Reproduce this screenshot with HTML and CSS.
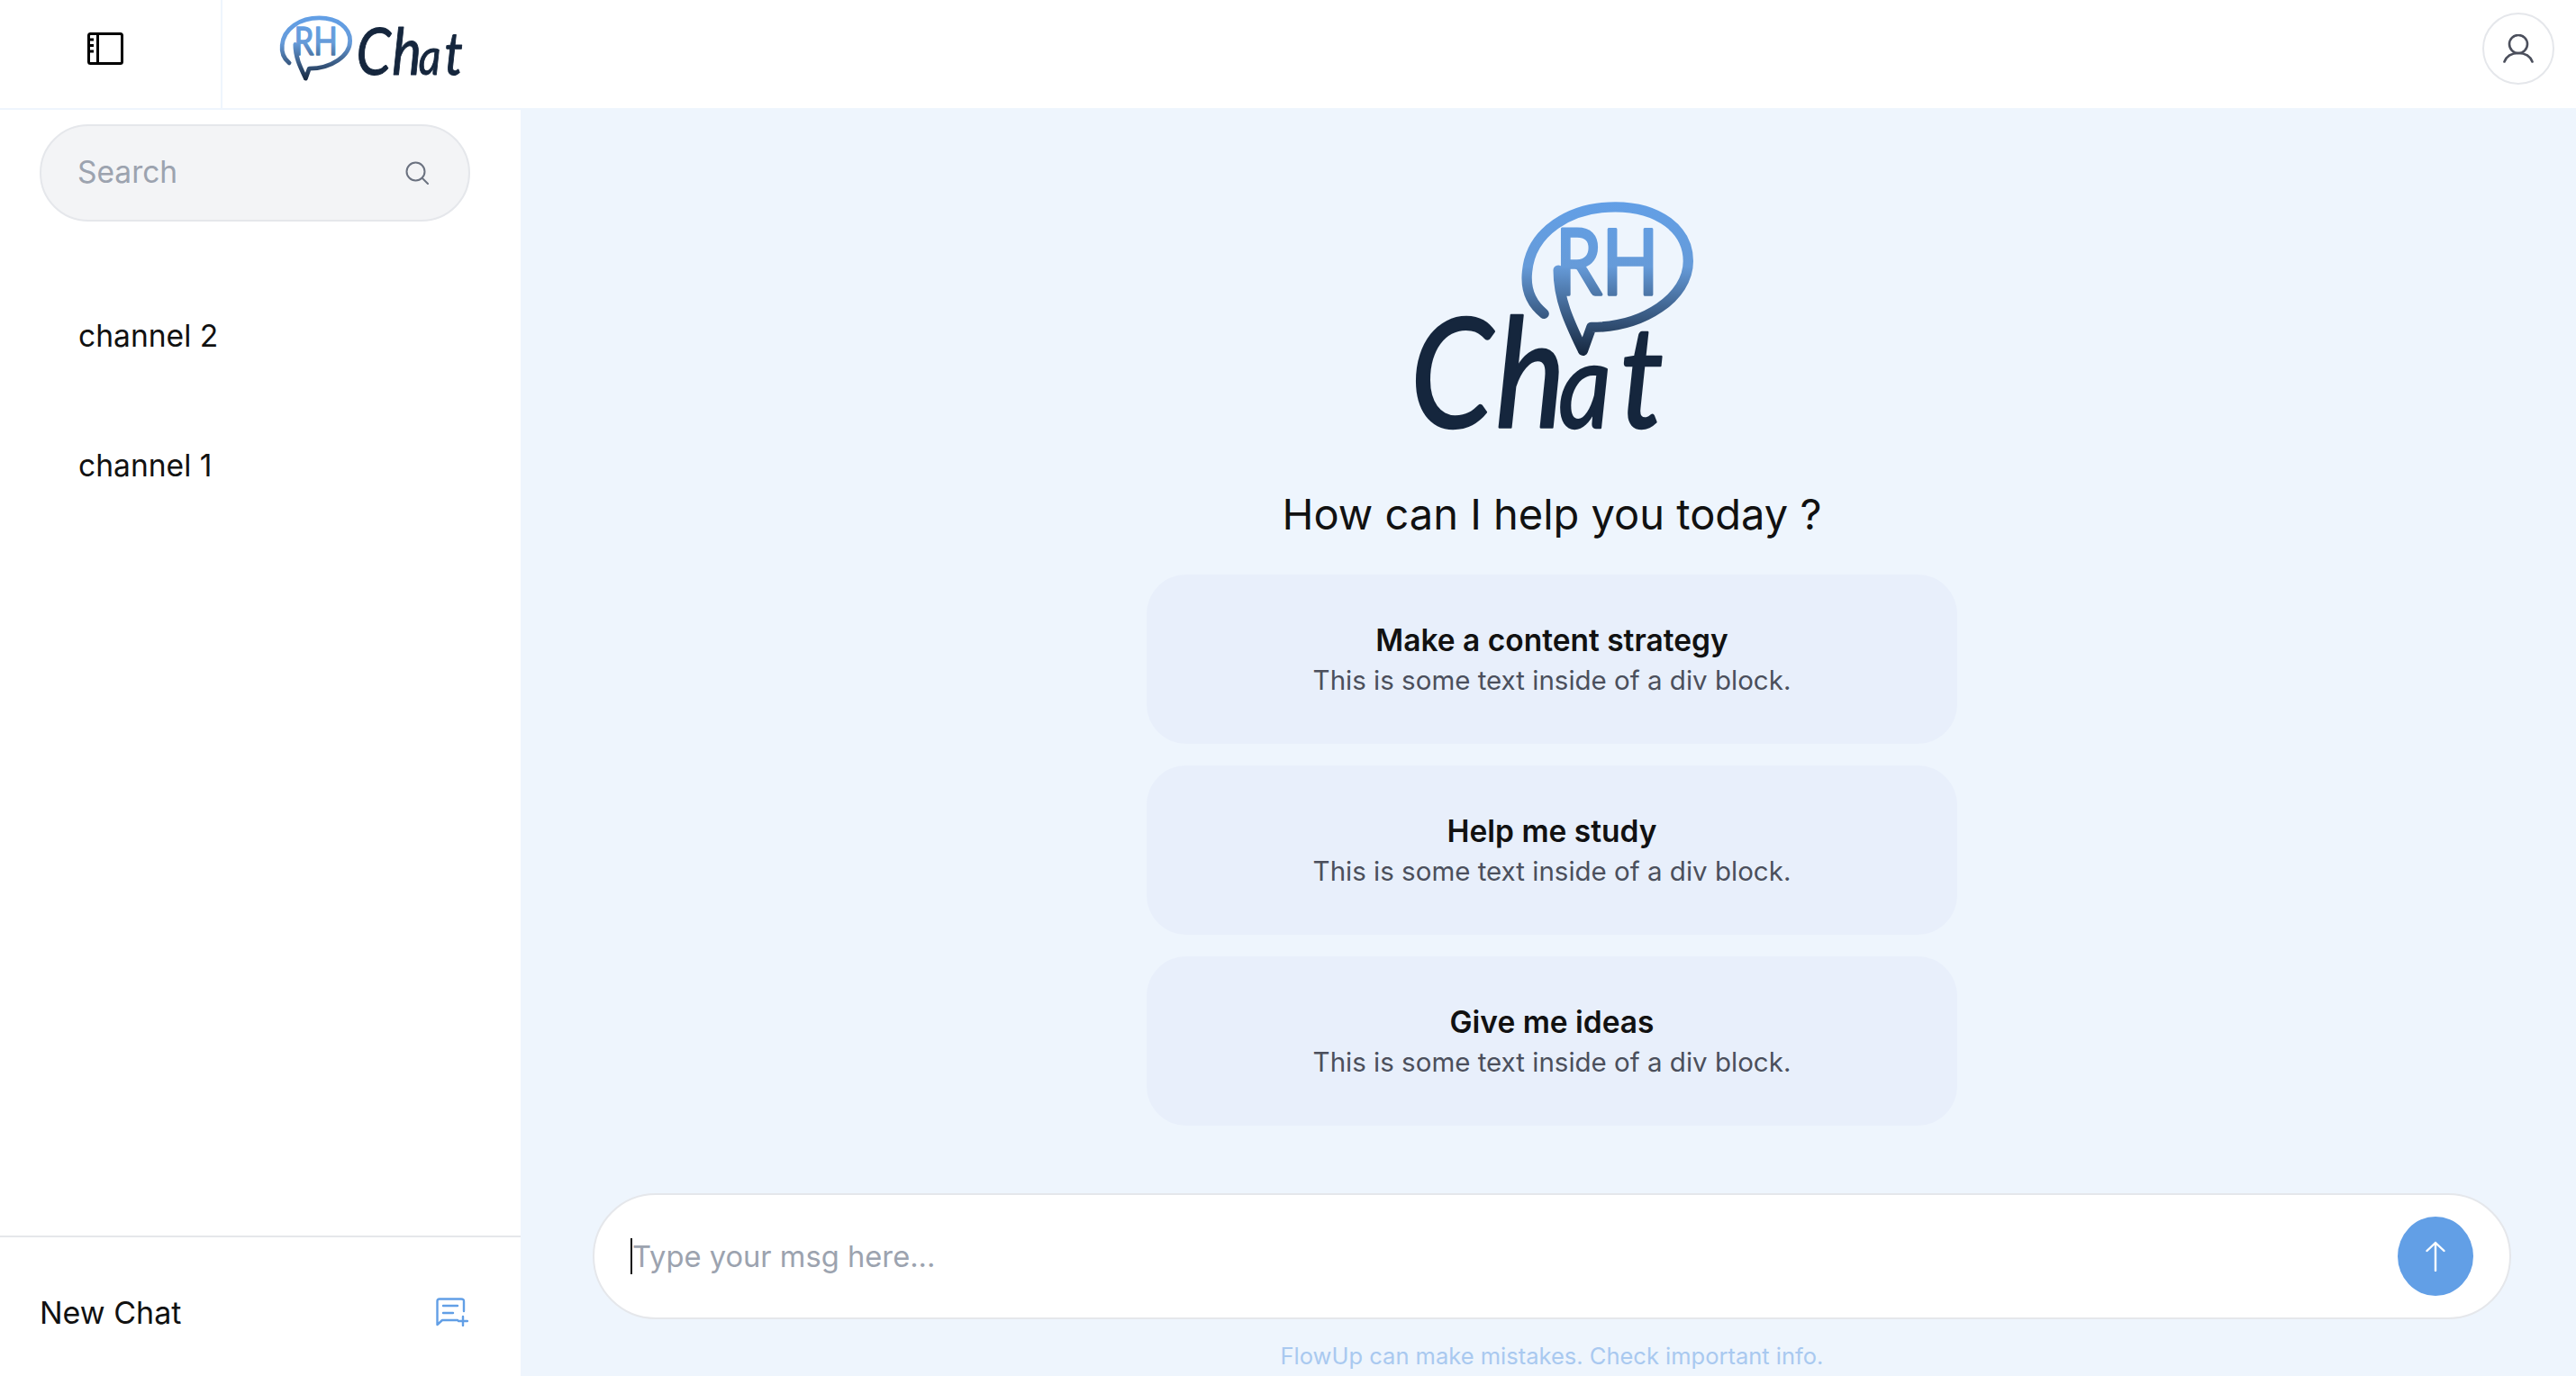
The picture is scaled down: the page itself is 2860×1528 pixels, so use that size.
FILE: index.html
```html
<!DOCTYPE html>
<html lang="en">
<head>
<meta charset="utf-8">
<title>RH Chat</title>
<link rel="stylesheet" href="styles.css">
</head>
<body>
<div class="app">
  <aside class="sidebar">
    <div class="brandbar">
      <button class="panel-toggle" aria-label="Toggle sidebar">
        <svg class="panel-icon" viewBox="0 0 40 36" fill="none" stroke="#000" stroke-width="3">
          <rect x="1.5" y="1.5" width="37" height="33" rx="2"/>
          <path d="M11.500 1.500V34.500"/>
          <path d="M2 8H7M2 14.500H7M2 21H7"/>
        </svg>
      </button>
      <div class="brand">
        <svg class="brand-logo" viewBox="0 0 204 74">
          <defs>
            <linearGradient id="bubbleFill" gradientUnits="userSpaceOnUse" x1="0" y1="72" x2="0" y2="585">
              <stop offset="0" stop-color="#629fe6"/>
              <stop offset=".42" stop-color="#669bd9"/>
              <stop offset="1" stop-color="#15263d"/>
            </linearGradient>
            <symbol id="bubble" class="logo-part" viewBox="520 72 570 513">
              <path class="bubble-line" d="M592 445C548 410 530 360 536 305C548 170 680 89 830 89C975 89 1073 165 1073 270C1073 390 925 490 750 490L722 568C680 480 640 400 640 300"/>
              <text class="bubble-text" x="630" y="380" textLength="345" lengthAdjust="spacingAndGlyphs">RH</text>
            </symbol>
            <symbol id="word" class="logo-part" viewBox="150 440 850 400">
              <text class="wordmark" transform="scale(.87 1)" y="826"><tspan class="w-c" x="168">C</tspan><tspan class="w-h" x="494">h</tspan><tspan class="w-a" x="736">a</tspan><tspan class="w-t" x="972">t</tspan></text>
            </symbol>
          </defs>
          <use href="#bubble" x="0" y="0" width="80" height="73"/>
          <use href="#word" x="85" y="12" width="119" height="56"/>
        </svg>
      </div>
    </div>
    <div class="search">
      <input class="search-input" type="text" placeholder="Search">
      <svg class="search-icon" viewBox="0 0 26 26" fill="none" stroke="#6b7280" stroke-width="2" stroke-linecap="round">
        <circle cx="11.500" cy="11.500" r="10"/>
        <path d="M19 19L25 25"/>
      </svg>
    </div>
    <nav class="channels">
      <a class="channel">channel 2</a>
      <a class="channel">channel 1</a>
    </nav>
    <div class="new-chat">
      <span>New Chat</span>
      <svg class="new-chat-icon" viewBox="0 0 36 32" fill="none" stroke="#629fe6" stroke-width="2.400" stroke-linecap="round" stroke-linejoin="round">
        <path d="M31 15V4Q31 1.500 28 1.500H4Q1.500 1.500 1.500 4V30L7 25H24"/>
        <path d="M8 9H24M8 17H19M30 21V31M25 26H35"/>
      </svg>
    </div>
  </aside>

  <main class="main">
    <header class="topbar">
      <button class="avatar" aria-label="Account">
        <svg class="avatar-icon" viewBox="0 0 34 32" fill="none" stroke="#4b4f5c" stroke-width="2.600" stroke-linecap="round">
          <circle cx="17" cy="11" r="10"/>
          <path d="M1.500 30.500C4 24 10 21 17 21S30 24 32.500 30.500"/>
        </svg>
      </button>
    </header>
    <section class="content">
      <svg class="hero-logo" viewBox="150 72 940 765">
        <use href="#bubble" x="520" y="72" width="570" height="513"/>
        <use href="#word" x="150" y="440" width="850" height="400"/>
      </svg>
      <h1 class="heading">How can I help you today ?</h1>
      <div class="cards">
        <div class="card"><strong class="card-title">Make a content strategy</strong><span class="card-text">This is some text inside of a div block.</span></div>
        <div class="card"><strong class="card-title">Help me study</strong><span class="card-text">This is some text inside of a div block.</span></div>
        <div class="card"><strong class="card-title">Give me ideas</strong><span class="card-text">This is some text inside of a div block.</span></div>
      </div>
      <div class="composer">
        <span class="caret"></span>
        <input class="composer-input" type="text" placeholder="Type your msg here...">
        <button class="send" aria-label="Send">
          <svg class="send-icon" viewBox="0 0 22 34" fill="none" stroke="#fff" stroke-width="2.400" stroke-linecap="round" stroke-linejoin="round">
            <path d="M11 33V2M1.500 11L11 2L20.500 11"/>
          </svg>
        </button>
      </div>
      <p class="disclaimer">FlowUp can make mistakes. Check important info.</p>
    </section>
  </main>
</div>
</body>
</html>
```
FILE: styles.css
```css
* { box-sizing: border-box; }
html, body { margin: 0; height: 100%; }
body {
  font-family: "Inter", "Noto Sans", sans-serif;
  color: #111;
  background: #eef5fd;
  overflow: hidden;
}
button { border: 0; background: none; padding: 0; font: inherit; cursor: pointer; }
input { border: 0; background: none; outline: 0; padding: 0; font: inherit; min-width: 0; }

.app { display: flex; width: 2860px; height: 1528px; }

/* Sidebar */
.sidebar { width: 578px; flex: none; display: flex; flex-direction: column; background: #fff; }
.brandbar { height: 122px; flex: none; display: flex; border-bottom: 2px solid #eef5fd; }
.panel-toggle {
  width: 247px; flex: none; display: flex; align-items: center; justify-content: center;
  padding: 0 11px 12px 0; border-right: 2px solid #eef5fd;
}
.panel-icon { width: 40px; height: 36px; display: block; }
.brand { flex: 1; display: flex; align-items: flex-start; padding: 17px 0 0 64px; }
.brand-logo, .hero-logo, .logo-part { overflow: visible; }
.brand-logo { width: 204px; height: 74px; display: block; }
.bubble-line { fill: none; stroke: url(#bubbleFill); stroke-width: 34; stroke-linecap: round; stroke-linejoin: round; }
.bubble-text {
  font-family: "Lato", sans-serif; font-size: 305px; font-weight: 400;
  fill: url(#bubbleFill); stroke: url(#bubbleFill); stroke-width: 10; stroke-linejoin: round;
}
.wordmark {
  font-family: "Lato", sans-serif; font-style: italic; font-weight: 400;
  fill: #15263d; stroke: #15263d; stroke-width: 7; stroke-linejoin: round;
}
.w-c, .w-h { font-size: 507px; }
.w-a { font-size: 395px; }
.w-t { font-size: 470px; }

.search {
  margin: 16px 56px 0 44px; height: 108px; flex: none; display: flex; align-items: center;
  padding: 0 44px 0 40px; background: #f3f4f6; border: 2px solid #e5e7eb; border-radius: 54px;
}
.search-input { flex: 1; font-size: 33.500px; color: #111; padding-bottom: 2px; }
.search-input::placeholder { color: #9ca3af; opacity: 1; }
.search-icon { width: 26px; height: 26px; flex: none; }

.channels { margin-top: 56px; flex: 1; display: flex; flex-direction: column; }
.channel { height: 144px; flex: none; display: flex; align-items: center; padding: 0 0 3px 87px; font-size: 33.600px; color: #111; }

.new-chat {
  height: 156px; flex: none; display: flex; align-items: center; justify-content: space-between;
  padding: 12px 58px 0 44px; border-top: 2px solid #e5e7eb; font-size: 34px; color: #111;
}
.new-chat-icon { width: 36px; height: 32px; flex: none; }

/* Main */
.main { flex: 1; display: flex; flex-direction: column; min-width: 0; }
.topbar {
  height: 122px; flex: none; display: flex; justify-content: flex-end; align-items: flex-start;
  padding: 14px 24px 0 0; background: #fff; border-bottom: 2px solid #eef5fd;
}
.avatar {
  width: 80px; height: 80px; display: flex; align-items: center; justify-content: center;
  border: 2px solid #e5e7eb; border-radius: 50%;
}
.avatar-icon { width: 34px; height: 32px; }
.content { flex: 1; display: flex; flex-direction: column; align-items: center; padding: 102px 72px 0 80px; background: #eef5fd; }
.hero-logo { width: 313px; height: 255px; flex: none; display: block; }
.heading { margin: 62px 0 0; height: 60px; line-height: 60px; font-size: 47px; font-weight: 400; color: #111; }
.cards { margin-top: 37px; width: 900px; display: flex; flex-direction: column; gap: 24px; }
.card {
  height: 188px; display: flex; flex-direction: column; align-items: center; justify-content: center;
  padding-top: 2px; background: #e8effb; border-radius: 44px;
}
.card-title { line-height: 44px; font-size: 33.500px; font-weight: 600; color: #111; }
.card-text { line-height: 44px; font-size: 29.500px; color: #4b4f5c; }
.composer {
  margin-top: 75px; width: 100%; height: 140px; flex: none; display: flex; align-items: center;
  padding: 0 40px 0 40px; background: #fff; border: 2px solid #e5e7eb; border-radius: 70px;
}
.caret { width: 2px; height: 40px; flex: none; background: #111; }
.composer-input { flex: 1; font-size: 32.700px; }
.composer-input::placeholder { color: #9ca3af; opacity: 1; }
.send { width: 84px; height: 88px; flex: none; display: flex; align-items: center; justify-content: center; background: #629fe6; border-radius: 50%; }
.send-icon { width: 22px; height: 34px; }
.disclaimer { margin: 25px 0 0; line-height: 32px; font-size: 25.500px; color: #a9c9f0; }
```
